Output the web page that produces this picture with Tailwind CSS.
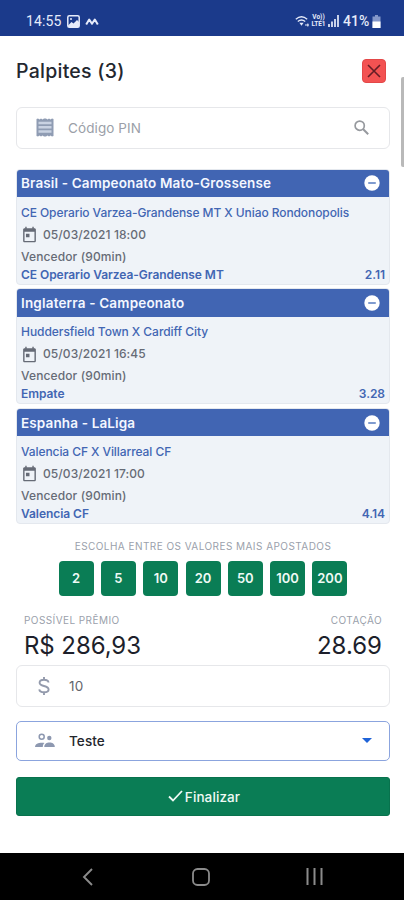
<!DOCTYPE html>
<html lang="pt-BR">
<head>
<meta charset="utf-8">
<meta name="viewport" content="width=device-width, initial-scale=1">
<title>Palpites</title>
<script src="https://cdn.jsdelivr.net/npm/@tailwindcss/browser@4"></script>
</head>
<body class="bg-white">
<svg class="hidden">
  <symbol id="minus" viewBox="0 0 16 16"><circle cx="8" cy="8" r="7.7" fill="#fff"/><rect x="4.200" y="7" width="7.600" height="2" rx=".5" fill="#7f9bcf"/></symbol>
  <symbol id="calendar" viewBox="0 0 24 24"><path fill="currentColor" d="M19 3h-1V1h-2v2H8V1H6v2H5c-1.100 0-2 .9-2 2v16c0 1.100.9 2 2 2h14c1.100 0 2-.9 2-2V5c0-1.100-.9-2-2-2zm0 18H5V8h14v13zM7 11h5v5H7z"/></symbol>
</svg>
<div class="relative flex h-[900px] w-[404px] flex-col overflow-hidden bg-white font-['Inter','Liberation_Sans',sans-serif]">
  <header class="flex h-[35.500px] shrink-0 items-center bg-[#1b3a8b] pt-[7px] pr-[23px] pl-[26px] text-[#e6ebfa]">
    <span class="w-[41px] font-['Roboto',sans-serif] text-[14px] tracking-[0.1px]">14:55</span>
    <svg class="h-[13px] w-[13px]" viewBox="0 0 13 13"><rect x=".8" y=".8" width="11.400" height="11.400" rx="1.500" fill="none" stroke="currentColor" stroke-width="1.500"/><path d="M1 10.500 4.500 7l2 1.500L10 5l2 2v5H1z" fill="currentColor"/><circle cx="4" cy="4" r="1" fill="currentColor"/></svg>
    <svg class="ml-[5px] h-[9px] w-[14px]" viewBox="0 0 14 9"><path d="M1.200 7.500 4.200 2.500 7 6.800 9.800 2.500 12.800 7.500" fill="none" stroke="currentColor" stroke-width="2" stroke-linejoin="round"/></svg>
    <div class="ml-auto flex items-center">
      <svg class="h-[13px] w-[15px]" viewBox="0 0 15 13"><path d="M.8 4.300Q6.500-.7 12.200 4.300M2.800 6.500q3.700-3 7.400 0" fill="none" stroke="currentColor" stroke-width="1.300"/><path d="M4.400 7.800h4.200L6.500 10.800z" fill="currentColor"/><path d="M10 10h4M12.800 8.500v3" stroke="currentColor"/></svg>
      <span class="ml-[1px] flex w-[15px] flex-col items-center font-['Roboto',sans-serif] text-[6.500px] leading-[7px] font-bold"><span>Vo))</span><span>LTE1</span></span>
      <svg class="ml-[2px] h-[12px] w-[11px]" viewBox="0 0 11 12"><path d="M1 12V9M4 12V6.500M7 12V4M10 12V0" stroke="currentColor" stroke-width="1.700"/></svg>
      <span class="ml-[4px] w-[27px] font-['Roboto',sans-serif] text-[14px] font-medium whitespace-nowrap">41%</span>
      <svg class="ml-[2px] h-[13px] w-[9px]" viewBox="0 0 9 13"><path d="M3 0h3v1.500h2.500V13h-8V1.500H3z" fill="#8497ca"/><path d="M.5 6.500h8V13h-8z" fill="#fff"/></svg>
    </div>
  </header>

  <main class="flex h-[817.500px] shrink-0 flex-col pr-[14px] pl-[16px]">
    <div class="mt-[23px] flex h-[25px] items-center justify-between pr-[4px]">
      <h1 class="pt-[1px] text-[19.500px] font-medium tracking-[0.250px] text-[#23272f]">Palpites (3)</h1>
      <button class="flex h-[24px] w-[24px] items-center justify-center rounded-[4px] border border-[#e34848] bg-[#f35252]" aria-label="Fechar">
        <svg class="h-[14px] w-[14px]" viewBox="0 0 14 14"><path d="M1 1 13 13M13 1 1 13" stroke="#651d25" stroke-width="1.600"/></svg>
      </button>
    </div>

    <div class="mt-[23px] flex h-[42px] shrink-0 items-center rounded-[6px] border-[1.500px] border-[#e6e7ea] pr-[20px] pl-[19px]">
      <svg class="h-[19px] w-[18px]" viewBox="0 0 18 19"><path d="M.5 1 2 .5l1.500 1L5 .5l1.500 1L8 .5h2l1.500 1L13 .5l1.500 1L16 .5l1.500.5v17l-1.500.5-1.500-1-1.500 1-1.500-1-1.500 1H8l-1.500-1-1.500 1-1.500-1-1.500 1L.5 18z" fill="#8f9cb3"/><path d="M2.500 5h13M2.500 9.300h13M2.500 13.500h13" stroke="#c9d2e2" stroke-width="2.600"/></svg>
      <span class="ml-[14px] pt-[1px] text-[13.500px] tracking-[0.100px] text-[#9b9fa8]">Código PIN</span>
      <svg class="ml-auto h-[15px] w-[15px] text-[#96999e]" viewBox="0 0 15 15"><circle cx="5.700" cy="5.700" r="4.600" fill="none" stroke="currentColor" stroke-width="1.700"/><path d="m9 9 5.200 5.200" stroke="currentColor" stroke-width="2"/></svg>
    </div>

    <section class="mt-[20px] flex flex-col gap-[3.700px]">
      <article class="h-[116px] overflow-hidden rounded-[4px] border border-[#e4e8ee] bg-[#eff3f8] text-[12px] font-medium text-[#4266b3]">
        <div class="flex h-[27.500px] items-center justify-between bg-[#4165b3] pr-[9px] pl-[4px] text-[13.500px] font-semibold tracking-[0.140px] text-[#f4f7ff]"><h2>Brasil - Campeonato Mato-Grossense</h2><svg class="h-[16px] w-[16px]"><use href="#minus"/></svg></div>
        <div class="flex flex-col px-[4px] pt-[4.500px] whitespace-nowrap">
          <p class="h-[22px] leading-[22px] tracking-[-0.080px]">CE Operario Varzea-Grandense MT X Uniao Rondonopolis</p>
          <p class="flex h-[22px] items-center tracking-[0.080px] text-[#666b76]"><svg class="mr-[5px] h-[17px] w-[17px]"><use href="#calendar"/></svg>05/03/2021 18:00</p>
          <p class="h-[22px] leading-[22px] tracking-[0.120px] text-[#666b76]">Vencedor (90min)</p>
          <p class="flex h-[14px] items-center justify-between font-semibold tracking-[-0.050px]"><span>CE Operario Varzea-Grandense MT</span><span>2.11</span></p>
        </div>
      </article>
      <article class="h-[116px] overflow-hidden rounded-[4px] border border-[#e4e8ee] bg-[#eff3f8] text-[12px] font-medium text-[#4266b3]">
        <div class="flex h-[27.500px] items-center justify-between bg-[#4165b3] pr-[9px] pl-[4px] text-[13.500px] font-semibold tracking-[0.180px] text-[#f4f7ff]"><h2>Inglaterra - Campeonato</h2><svg class="h-[16px] w-[16px]"><use href="#minus"/></svg></div>
        <div class="flex flex-col px-[4px] pt-[4.500px] whitespace-nowrap">
          <p class="h-[22px] leading-[22px] tracking-[-0.050px]">Huddersfield Town X Cardiff City</p>
          <p class="flex h-[22px] items-center tracking-[0.080px] text-[#666b76]"><svg class="mr-[5px] h-[17px] w-[17px]"><use href="#calendar"/></svg>05/03/2021 16:45</p>
          <p class="h-[22px] leading-[22px] tracking-[0.120px] text-[#666b76]">Vencedor (90min)</p>
          <p class="flex h-[14px] items-center justify-between font-semibold tracking-[-0.050px]"><span>Empate</span><span>3.28</span></p>
        </div>
      </article>
      <article class="h-[116px] overflow-hidden rounded-[4px] border border-[#e4e8ee] bg-[#eff3f8] text-[12px] font-medium text-[#4266b3]">
        <div class="flex h-[27.500px] items-center justify-between bg-[#4165b3] pr-[9px] pl-[4px] text-[13.500px] font-semibold tracking-[0.140px] text-[#f4f7ff]"><h2>Espanha - LaLiga</h2><svg class="h-[16px] w-[16px]"><use href="#minus"/></svg></div>
        <div class="flex flex-col px-[4px] pt-[4.500px] whitespace-nowrap">
          <p class="h-[22px] leading-[22px] tracking-[-0.080px]">Valencia CF X Villarreal CF</p>
          <p class="flex h-[22px] items-center tracking-[0.080px] text-[#666b76]"><svg class="mr-[5px] h-[17px] w-[17px]"><use href="#calendar"/></svg>05/03/2021 17:00</p>
          <p class="h-[22px] leading-[22px] tracking-[0.120px] text-[#666b76]">Vencedor (90min)</p>
          <p class="flex h-[14px] items-center justify-between font-semibold tracking-[-0.050px]"><span>Valencia CF</span><span>4.14</span></p>
        </div>
      </article>
    </section>

    <p class="mt-[14px] h-[16px] text-center text-[10px] leading-[16px] tracking-[0.450px] whitespace-nowrap text-[#9a9fab]">ESCOLHA ENTRE OS VALORES MAIS APOSTADOS</p>
    <div class="mt-[7px] flex justify-center gap-[7.300px] text-[13px] font-semibold text-[#effaf5]">
      <button class="h-[35px] w-[35px] rounded-[4px] bg-[#0a7d55]">2</button>
      <button class="h-[35px] w-[35px] rounded-[4px] bg-[#0a7d55]">5</button>
      <button class="h-[35px] w-[35px] rounded-[4px] bg-[#0a7d55]">10</button>
      <button class="h-[35px] w-[35px] rounded-[4px] bg-[#0a7d55]">20</button>
      <button class="h-[35px] w-[35px] rounded-[4px] bg-[#0a7d55]">50</button>
      <button class="h-[35px] w-[35px] rounded-[4px] bg-[#0a7d55]">100</button>
      <button class="h-[35px] w-[35px] rounded-[4px] bg-[#0a7d55]">200</button>
    </div>

    <div class="mt-[16px] flex h-[53px] shrink-0 justify-between pr-[8px] pl-[8px] whitespace-nowrap">
      <div>
        <p class="h-[16px] text-[10px] leading-[16px] tracking-[0.430px] text-[#9a9fab]">POSSÍVEL PRÊMIO</p>
        <p class="h-[34px] pt-[1px] text-[24px] leading-[34px] tracking-[-0.080px] text-[#1d1f2b]">R$ 286,93</p>
      </div>
      <div class="text-right">
        <p class="h-[16px] text-[10px] leading-[16px] tracking-[0.430px] text-[#9a9fab]">COTAÇÃO</p>
        <p class="h-[34px] pt-[1px] text-[24px] leading-[34px] text-[#1d1f2b]">28.69</p>
      </div>
    </div>

    <div class="flex h-[42px] shrink-0 items-center rounded-[6px] border-[1.500px] border-[#e6e7ea] pl-[21px]">
      <svg class="h-[18px] w-[12px]" viewBox="0 0 12 18"><path d="M10.500 5.500C10.300 3.500 8.500 2.800 6 2.800S1.600 3.700 1.600 5.700 3.400 8.300 6 9s4.600 1.300 4.600 3.400S8.600 15.200 6 15.200s-4.500-.9-4.700-2.900M6 0v3M6 15v3" fill="none" stroke="#939aac" stroke-width="1.900"/></svg>
      <span class="ml-[19px] text-[13.500px] tracking-[0.300px] text-[#62656c]">10</span>
    </div>

    <div class="mt-[14px] flex h-[40px] shrink-0 items-center rounded-[5px] border border-[#8ba4de] pr-[17px] pl-[18px]">
      <svg class="h-[15px] w-[20px] text-[#8d98b0]" viewBox="0 0 20 15"><circle cx="6.700" cy="3.700" r="2.500" fill="none" stroke="currentColor" stroke-width="1.500"/><circle cx="14.300" cy="5" r="2.200" fill="currentColor"/><path d="M0 14c.2-3 3-4.300 7-4.300 1 0 1.800.1 2.500.3-1.200 1-1.700 2.200-1.700 4zM9.300 14c0-3 2.500-4.400 5.200-4.400S19.800 11 19.800 14z" fill="currentColor"/></svg>
      <span class="ml-[14px] pt-[1px] text-[13.500px] font-medium tracking-[0.100px] text-[#23262c]">Teste</span>
      <svg class="ml-auto h-[5px] w-[10px]" viewBox="0 0 10 5"><path d="M0 0h10L5 5z" fill="#1f63d8"/></svg>
    </div>

    <button class="mt-[16px] flex h-[39px] shrink-0 items-center justify-center gap-[2px] rounded-[3px] border border-[#08724d] bg-[#0a7d55] pl-[2px] text-[13.500px] font-medium tracking-[0.100px] text-[#effaf5]">
      <svg class="h-[12px] w-[15px]" viewBox="0 0 15 12"><path d="m1 6.500 4 4L14 1" fill="none" stroke="currentColor" stroke-width="1.800"/></svg><span class="pt-[1px]">Finalizar</span>
    </button>
  </main>

  <nav class="flex min-h-0 flex-1 items-center bg-black text-[#8b8b8b]">
    <svg class="ml-[82px] h-[18px] w-[11px]" viewBox="0 0 11 18"><path d="M10 1 2 9l8 8" fill="none" stroke="currentColor" stroke-width="1.900"/></svg>
    <svg class="ml-[99px] h-[18px] w-[18px]" viewBox="0 0 18 18"><rect x="1" y="1" width="16" height="16" rx="4.500" fill="none" stroke="currentColor" stroke-width="1.800"/></svg>
    <svg class="ml-[96px] h-[17px] w-[17px]" viewBox="0 0 17 17"><path d="M1.500 0v17M8.500 0v17M15.500 0v17" stroke="currentColor" stroke-width="2"/></svg>
  </nav>
  <div class="absolute top-[77px] right-0 h-[90px] w-[3px] rounded-l-[2px] bg-[#b9b9b9]"></div>
</div>
</body>
</html>
